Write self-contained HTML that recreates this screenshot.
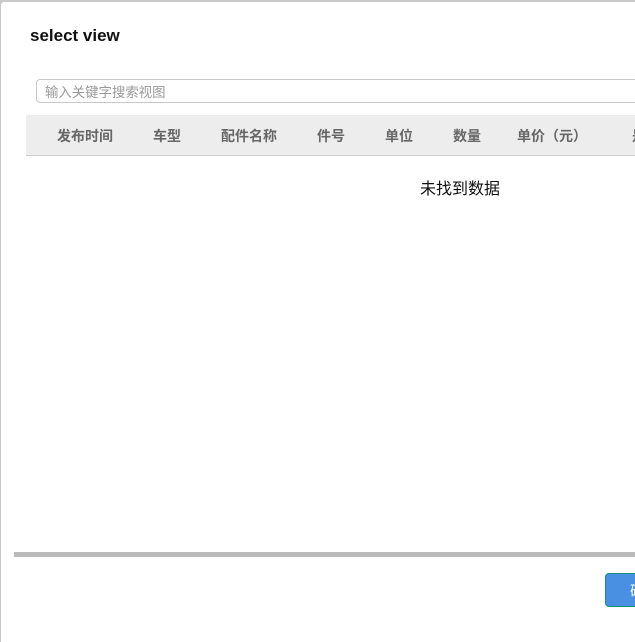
<!DOCTYPE html>
<html><head><meta charset="utf-8"><style>
body{margin:0;width:635px;height:636px;background:#c9c9c9;overflow:hidden;position:relative;font-family:"Liberation Sans","Noto Sans CJK SC",sans-serif}
.d{position:absolute;left:1px;top:2px;width:640px;height:640px;background:#fff;border-radius:3px 0 0 0}
.t{position:absolute;left:30px;top:26px;font-size:17px;font-weight:bold;color:#111}
.in{position:absolute;left:36px;top:79px;width:620px;height:24px;border:1px solid #c8c8c8;border-radius:4px;box-sizing:border-box;font-size:13.4px;color:#999;padding:1px 0 0 8px}
.h{position:absolute;left:26px;top:115px;width:620px;height:40px;background:#ededed;border-bottom:1px solid #d0d0d0}
.h span{position:absolute;top:11px;font-size:14px;font-weight:bold;color:#666;transform:translateX(-50%);white-space:nowrap}
.e{position:absolute;left:420px;top:175px;font-size:16px;color:#111}
.s{position:absolute;left:14px;top:552px;width:630px;height:5px;background:#bbb}
.b{position:absolute;left:605px;top:573px;width:60px;height:34px;background:#4a90e2;border:1px solid #18907a;border-radius:4px;box-sizing:border-box;color:#fff;font-size:14px;padding:7px 0 0 24px}
</style></head><body>
<div class="d"></div>
<div class="t">select view</div>
<div class="in">输入关键字搜索视图</div>
<div class="h">
<span style="left:59px">发布时间</span><span style="left:141px">车型</span><span style="left:223px">配件名称</span><span style="left:305px">件号</span><span style="left:373px">单位</span><span style="left:441px">数量</span><span style="left:526px">单价（元）</span><span style="left:613px">是</span>
</div>
<div class="e">未找到数据</div>
<div class="s"></div>
<div class="b">确</div>
</body></html>
